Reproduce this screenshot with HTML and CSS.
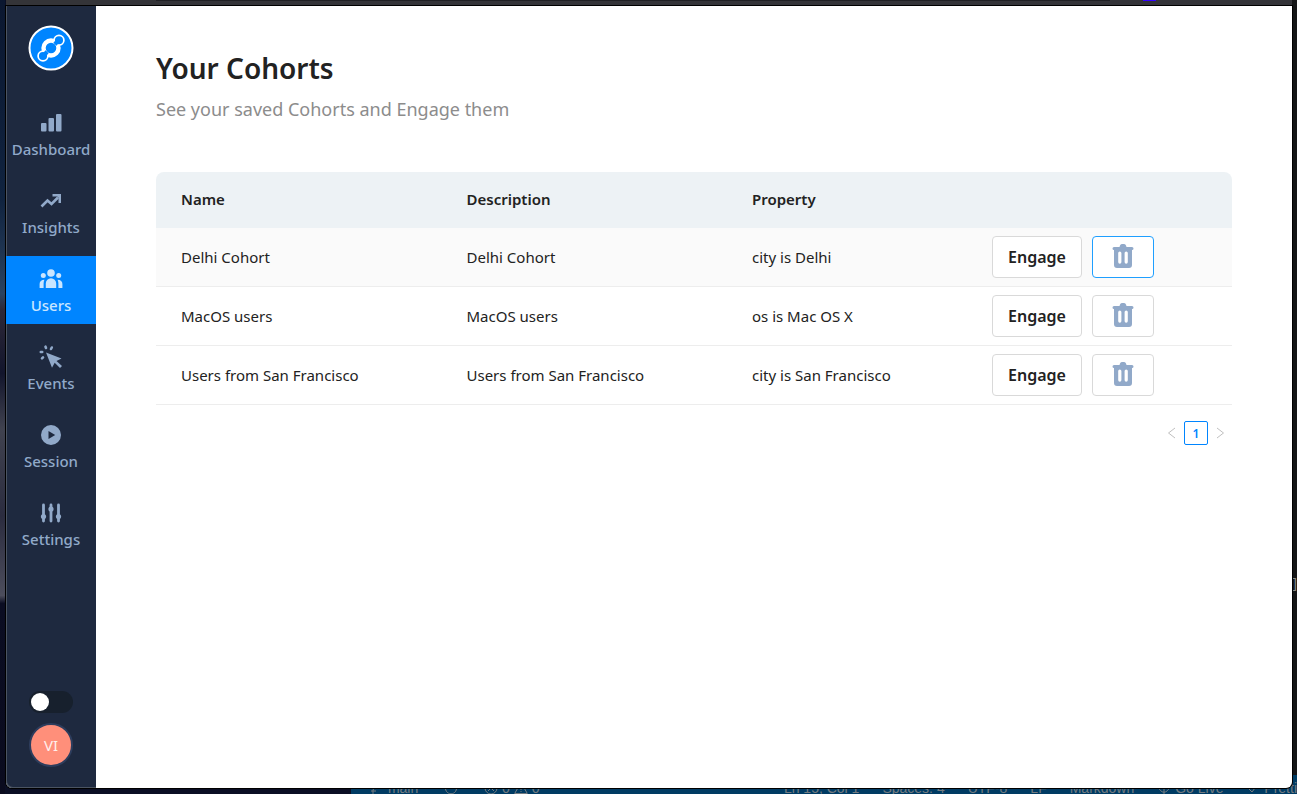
FILE: index.html
```html
<!DOCTYPE html>
<html lang="en">
<head>
<meta charset="utf-8">
<title>Your Cohorts</title>
<link rel="stylesheet" href="styles.css">
</head>
<body>
<div class="tabstrip"><span class="tab"></span><span class="tab-marker"></span></div>
<div class="bracket">]</div>
<footer class="statusbar">
  <div class="status-group">
    <span><svg viewBox="0 0 14 14"><path d="M3 13V9q0-2 3-2t4-3M10 4a1.500 1.500 0 1 0 0-3 1.500 1.500 0 0 0 0 3M1 10h5"/></svg> main</span>
    <span><svg viewBox="0 0 14 14"><path d="M2 5a5.500 5.500 0 1 0 10 0M7 1a5 5 0 0 1 4 2"/></svg></span>
    <span><svg viewBox="0 0 14 14"><circle cx="7" cy="7" r="6"/><path d="M4 4l6 6M10 4l-6 6"/></svg> 0 <svg viewBox="0 0 14 14"><path d="M7 1.500L13.300 12.500H.7zM7 5v4M7 10v1"/></svg> 0</span>
  </div>
  <div class="status-group status-right">
    <span>Ln 15, Col 1</span><span>Spaces: 4</span><span>UTF-8</span><span>LF</span><span>Markdown</span>
    <span><svg viewBox="0 0 14 14"><path d="M3 3a5 5 0 1 0 8 0M7 4v9M5 6a2 2 0 1 1 4 0"/></svg> Go Live</span>
    <span><svg viewBox="0 0 14 14"><path d="M2 7l4 4 6-8"/></svg> Pretti</span>
  </div>
</footer>
<div class="window">
  <aside class="sidebar">
    <a class="logo" href="#" aria-label="Home">
      <svg viewBox="0 0 46 46" width="46" height="46">
        <circle cx="23" cy="23" r="21.5" fill="#0085ff" stroke="#fff" stroke-width="2"/>
        <circle cx="23" cy="23" r="7.5" fill="none" stroke="#fff" stroke-width="4.4"/>
        <circle cx="31" cy="15.200" r="4.900" fill="#0085ff" stroke="#fff" stroke-width="1.700"/>
        <circle cx="15" cy="31" r="4.900" fill="#0085ff" stroke="#fff" stroke-width="1.700"/>
        <path d="M26.500 16.500l3 3M16.500 26.500l3 3" stroke="#0085ff" stroke-width="3.200"/>
      </svg>
    </a>
    <nav class="nav">
      <a class="nav-item" href="#">
        <svg viewBox="0 0 24 24"><rect x="2" y="12" width="5.500" height="8.500" rx="1"/><rect x="9.500" y="7" width="5.500" height="13.500" rx="1"/><rect x="17" y="3" width="5.500" height="17.500" rx="1"/></svg>
        <span>Dashboard</span>
      </a>
      <a class="nav-item" href="#">
        <svg viewBox="0 0 24 24"><path d="M2.500 17.500L8.500 11.500L12.500 15L19 8.500" fill="none" stroke="currentColor" stroke-width="2.600"/><path d="M13.500 5H22v9h-2.500V7.500h-6z"/><path d="M17 6h4v4z"/></svg>
        <span>Insights</span>
      </a>
      <a class="nav-item active" href="#" aria-current="page">
        <svg viewBox="0 0 24 24"><circle cx="12" cy="6" r="3.800"/><circle cx="4.300" cy="8.500" r="2.500"/><circle cx="19.700" cy="8.500" r="2.500"/><path d="M6.800 21v-4.500a5.200 5.200 0 0 1 10.400 0V21zM.6 21v-4c0-2.600 1.700-4.300 4.800-4.300-.6 1.200-.8 2.500-.8 4V21zM23.400 21v-4c0-2.600-1.700-4.300-4.800-4.300.6 1.200.8 2.500.8 4V21z"/></svg>
        <span>Users</span>
      </a>
      <a class="nav-item" href="#">
        <svg viewBox="0 0 24 24"><path d="M7 7.500l15.500 6-5 2.500 5.500 5-2 2-5.300-5.300-2.700 5z"/><path d="M6.500 1.700l.5 1.300M12.800 2.500l-.8 1.500M1.800 7h1.400M3 13.300l1-1" fill="none" stroke="currentColor" stroke-width="2.600" stroke-linecap="round"/></svg>
        <span>Events</span>
      </a>
      <a class="nav-item" href="#">
        <svg viewBox="0 0 24 24"><path fill-rule="evenodd" d="M12 2a10 10 0 1 0 0 20 10 10 0 0 0 0-20zM9.500 8v8l6.700-4z"/></svg>
        <span>Session</span>
      </a>
      <a class="nav-item" href="#">
        <svg viewBox="0 0 24 24"><path d="M4.500 4v16M12 4v16M19.500 4v16" stroke="currentColor" stroke-width="2.800" stroke-linecap="round"/><circle cx="4.500" cy="15.500" r="2.600"/><circle cx="12" cy="8" r="2.600"/><circle cx="19.500" cy="15.500" r="2.600"/></svg>
        <span>Settings</span>
      </a>
    </nav>
    <label class="switch"><input type="checkbox" role="switch" aria-label="Theme"></label>
    <button class="avatar" type="button">VI</button>
  </aside>
  <main class="content">
    <h1>Your Cohorts</h1>
    <p class="subtitle">See your saved Cohorts and Engage them</p>
    <table class="cohorts">
      <colgroup><col><col><col class="col-property"><col class="col-actions"></colgroup>
      <thead>
        <tr><th scope="col">Name</th><th scope="col">Description</th><th scope="col">Property</th><td></td></tr>
      </thead>
      <tbody>
        <tr class="hovered"><td>Delhi Cohort</td><td>Delhi Cohort</td><td>city is Delhi</td>
          <td><div class="actions"><button class="btn" type="button">Engage</button><button class="btn btn-delete focused" type="button" aria-label="Delete Delhi Cohort"><svg viewBox="0 0 22 26"><path fill-rule="evenodd" d="M8 2.500A2 2 0 0 1 10 1h2a2 2 0 0 1 2 1.500L14.500 4H20a1.300 1.300 0 0 1 0 3v15a3 3 0 0 1-3 3H5a3 3 0 0 1-3-3V7a1.300 1.300 0 0 1 0-3h5.500zM7.800 8.500a1.600 1.600 0 0 0-1.600 1.600v9a1.600 1.600 0 0 0 3.200 0v-9a1.600 1.600 0 0 0-1.600-1.600zM14.200 8.500a1.600 1.600 0 0 0-1.600 1.600v9a1.600 1.600 0 0 0 3.200 0v-9a1.600 1.600 0 0 0-1.600-1.600z"/></svg></button></div></td></tr>
        <tr><td>MacOS users</td><td>MacOS users</td><td>os is Mac OS X</td>
          <td><div class="actions"><button class="btn" type="button">Engage</button><button class="btn btn-delete" type="button" aria-label="Delete MacOS users"><svg viewBox="0 0 22 26"><path fill-rule="evenodd" d="M8 2.500A2 2 0 0 1 10 1h2a2 2 0 0 1 2 1.500L14.500 4H20a1.300 1.300 0 0 1 0 3v15a3 3 0 0 1-3 3H5a3 3 0 0 1-3-3V7a1.300 1.300 0 0 1 0-3h5.500zM7.800 8.500a1.600 1.600 0 0 0-1.600 1.600v9a1.600 1.600 0 0 0 3.200 0v-9a1.600 1.600 0 0 0-1.600-1.600zM14.200 8.500a1.600 1.600 0 0 0-1.600 1.600v9a1.600 1.600 0 0 0 3.200 0v-9a1.600 1.600 0 0 0-1.600-1.600z"/></svg></button></div></td></tr>
        <tr><td>Users from San Francisco</td><td>Users from San Francisco</td><td>city is San Francisco</td>
          <td><div class="actions"><button class="btn" type="button">Engage</button><button class="btn btn-delete" type="button" aria-label="Delete Users from San Francisco"><svg viewBox="0 0 22 26"><path fill-rule="evenodd" d="M8 2.500A2 2 0 0 1 10 1h2a2 2 0 0 1 2 1.500L14.500 4H20a1.300 1.300 0 0 1 0 3v15a3 3 0 0 1-3 3H5a3 3 0 0 1-3-3V7a1.300 1.300 0 0 1 0-3h5.500zM7.800 8.500a1.600 1.600 0 0 0-1.600 1.600v9a1.600 1.600 0 0 0 3.200 0v-9a1.600 1.600 0 0 0-1.600-1.600zM14.200 8.500a1.600 1.600 0 0 0-1.600 1.600v9a1.600 1.600 0 0 0 3.200 0v-9a1.600 1.600 0 0 0-1.600-1.600z"/></svg></button></div></td></tr>
      </tbody>
    </table>
    <nav class="pagination" aria-label="Pagination">
      <button type="button" aria-label="Previous page" disabled><svg viewBox="0 0 12 12"><path d="M9 1L2.500 6L9 11"/></svg></button>
      <button type="button" class="current" aria-current="page">1</button>
      <button type="button" aria-label="Next page" disabled><svg viewBox="0 0 12 12"><path d="M3 1L9.500 6L3 11"/></svg></button>
    </nav>
  </main>
</div>
</body>
</html>
```
FILE: styles.css
```css
* { box-sizing: border-box; }
body {
  margin: 0;
  height: 100vh;
  padding: 6px 5px 6px 6px;
  display: flex;
  position: relative;
  overflow: hidden;
  font-family: "Noto Sans", "Open Sans", sans-serif;
  font-size: 15px;
  color: #222;
  background: linear-gradient(90deg, #0a0e24 0, #0a0e24 50%, #141516 50%);
}
body::before {
  content: "";
  position: absolute;
  left: 0;
  top: 0;
  bottom: 0;
  width: 5px;
  background: linear-gradient(#0b1730 0, #10233f 25%, #2a4260 37%, #2d2838 39%, #12152c 47%, #40424f 54%, #2b2c3f 65%, #4c4d5c 75%, #0b0d22 76%, #0a0b1e 100%);
}
.tabstrip {
  position: absolute;
  top: 0;
  left: 6px;
  right: 5px;
  height: 6px;
  background: #343438;
  border-bottom: 1px solid #241f25;
}
.tab { position: absolute; left: 150px; right: 182px; height: 1px; background: #202024; }
.tab-marker { position: absolute; right: 136px; width: 13px; height: 1px; background: #3300ff; }
.bracket { position: absolute; right: 0; top: 573px; font-size: 14px; color: #888; }
.statusbar {
  position: absolute;
  left: 351px;
  right: 0;
  bottom: -7px;
  height: 26px;
  padding-left: 19px;
  display: flex;
  justify-content: space-between;
  background: #003b63;
  color: #747b80;
  font: 14px/26px "Liberation Sans", sans-serif;
  white-space: nowrap;
}
.statusbar svg {
  width: 14px;
  height: 14px;
  vertical-align: -2px;
  fill: none;
  stroke: currentColor;
}
.status-group { display: flex; gap: 26px; }
.status-right { gap: 23px; }
.window {
  position: relative;
  flex: 1;
  display: flex;
  overflow: hidden;
  border-radius: 0 0 6px 6px;
  background: #fff;
  box-shadow: 0 0 0 1px #000;
}
.sidebar {
  width: 90px;
  flex: none;
  padding: 19px 0 21px;
  display: flex;
  flex-direction: column;
  align-items: center;
  background: #1e293f;
  box-shadow: inset 1px -1px 0 #4b5462;
  border-radius: 0 0 0 6px;
}
.logo { display: block; height: 46px; }
.nav {
  align-self: stretch;
  margin-top: 29px;
  display: flex;
  flex-direction: column;
  gap: 10px;
}
.nav-item {
  height: 68px;
  padding-top: 11px;
  display: flex;
  flex-direction: column;
  align-items: center;
  gap: 4px;
  color: #91a9c9;
  font-size: 15px;
  font-weight: 500;
  line-height: 20px;
  text-decoration: none;
}
.nav-item svg { width: 24px; height: 24px; fill: currentColor; }
.nav-item.active { color: #c9e5ff; background: #0085ff; }
.switch { margin-top: auto; height: 22px; }
.switch input {
  appearance: none;
  display: block;
  width: 44px;
  height: 22px;
  margin: 0;
  padding: 2px;
  border-radius: 11px;
  background: #17202d;
}
.switch input::before {
  content: "";
  display: block;
  width: 18px;
  height: 18px;
  border-radius: 50%;
  background: #fff;
}
.switch input:checked::before { margin-left: auto; }
.avatar {
  width: 44px;
  height: 44px;
  margin-top: 10px;
  padding: 0;
  border: 2px solid #2d3d5d;
  border-radius: 50%;
  background: #ff8f7a;
  color: #fff0ed;
  font: 15px "Noto Sans", sans-serif;
}
.content { flex: 1; min-width: 0; padding: 43px 60px; }
h1 { margin: 0; font-size: 28px; line-height: 38px; font-weight: 600; }
.subtitle { margin: 10px 0 51px; font-size: 18px; line-height: 24px; color: #8c8c8c; }
.cohorts { width: 100%; table-layout: fixed; border-collapse: separate; border-spacing: 0; }
.col-property { width: 240px; }
.col-actions { width: 265px; }
.cohorts th, .cohorts td { padding: 0 0 0 25px; text-align: left; }
.cohorts thead th, .cohorts thead td {
  height: 56px;
  padding-bottom: 2px;
  background: #edf2f5;
  font-weight: 600;
}
.cohorts thead th:first-child { border-radius: 8px 0 0 0; }
.cohorts thead td:last-child { border-radius: 0 8px 0 0; }
.cohorts tbody td { height: 59px; border-bottom: 1px solid #ededed; }
.hovered { background: #fafafa; }
.actions { display: flex; gap: 10px; }
.btn {
  width: 90px;
  height: 42px;
  padding: 0;
  border: 1px solid #d9d9d9;
  border-radius: 4px;
  background: #fff;
  color: #222;
  font: 600 16px "Noto Sans", sans-serif;
}
.btn-delete { width: 62px; padding-bottom: 2px; display: grid; place-items: center; }
.btn-delete.focused { border-color: #1f9fff; }
.btn-delete svg { width: 22px; height: 26px; fill: #91a9c9; }
.pagination { display: flex; justify-content: flex-end; margin-top: 16px; }
.pagination button {
  width: 24px;
  height: 24px;
  padding: 0;
  display: grid;
  place-items: center;
  border: 0;
  background: none;
}
.pagination .current {
  border: 1px solid #0085ff;
  border-radius: 2px;
  background: #fff;
  color: #0085ff;
  font: 600 12px "Noto Sans", sans-serif;
}
.pagination svg { width: 12px; height: 12px; fill: none; stroke: #bfbfbf; }
```
